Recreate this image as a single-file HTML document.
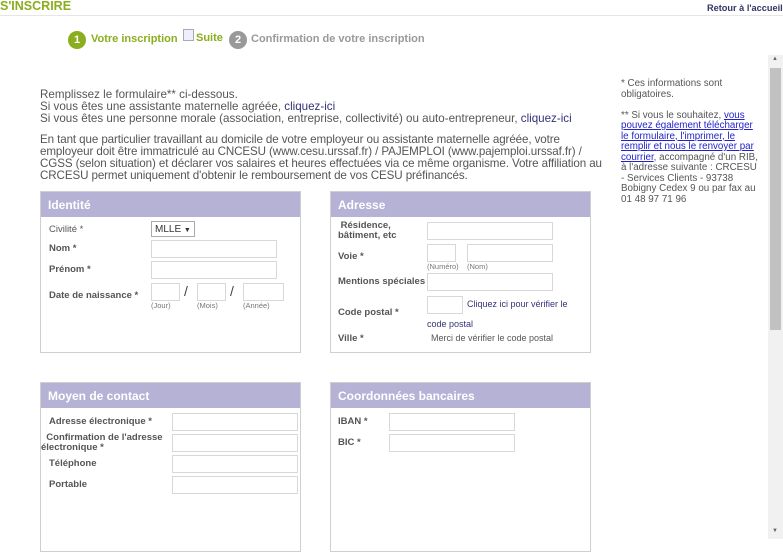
<!DOCTYPE html>
<html><head><meta charset="utf-8"><style>
*{margin:0;padding:0;box-sizing:border-box}
body{width:783px;height:539px;overflow:hidden;background:#fff;font-family:"Liberation Sans",Arial,sans-serif;position:relative;color:#555}
.a{position:absolute;white-space:nowrap}
.box{position:absolute;border:1px solid #cfcfcf;width:261px;background:#fff}
.hd{background:#b5b2d6;height:25px;color:#fff;font-weight:bold;font-size:12px;padding:6px 0 0 7px}
.in{position:absolute;border:1px solid #d8d8d8;background:#fff;height:18px}
.l{position:absolute;font-size:9.5px;font-weight:bold;color:#555;white-space:nowrap}
.s{position:absolute;font-size:7.5px;color:#777;white-space:nowrap}
a{color:#333377;text-decoration:none}
</style></head><body>
<div class="a" style="left:0;top:-1px;font-size:12.5px;font-weight:bold;color:#8aae1e">S'INSCRIRE</div>
<div style="position:absolute;left:0;top:15px;width:783px;height:1px;background:#e6e6e6"></div>
<div class="a" style="left:707px;top:3px;font-size:9.2px;font-weight:bold;color:#333366">Retour à l'accueil</div>

<div class="a" style="left:68px;top:31px;width:18px;height:18px;border-radius:50%;background:#8aae1e;color:#fff;font-size:11px;font-weight:bold;text-align:center;line-height:18px">1</div>
<div class="a" style="left:91px;top:33px;font-size:11px;font-weight:bold;color:#8aae1e">Votre inscription</div>
<div class="a" style="left:183px;top:29px;width:11px;height:12px;border:1px solid #aaa;background:#eef"></div>
<div class="a" style="left:196px;top:32px;font-size:11px;font-weight:bold;color:#8aae1e">Suite</div>
<div class="a" style="left:229px;top:31px;width:18px;height:18px;border-radius:50%;background:#999;color:#fff;font-size:11px;font-weight:bold;text-align:center;line-height:18px">2</div>
<div class="a" style="left:251px;top:33px;font-size:11px;font-weight:bold;color:#999">Confirmation de votre inscription</div>

<div class="a" style="left:40px;top:89px;font-size:11.6px;line-height:12px;color:#555">Remplissez le formulaire** ci-dessous.<br>Si vous êtes une assistante maternelle agréée, <a>cliquez-ici</a><br>Si vous êtes une personne morale (association, entreprise, collectivité) ou auto-entrepreneur, <a>cliquez-ici</a></div>
<div class="a" style="left:40px;top:134px;font-size:11.6px;line-height:12px;color:#555;letter-spacing:-0.1px">En tant que particulier travaillant au domicile de votre employeur ou assistante maternelle agréée, votre<br>employeur doit être immatriculé au CNCESU (www.cesu.urssaf.fr) / PAJEMPLOI (www.pajemploi.urssaf.fr) /<br>CGSS (selon situation) et déclarer vos salaires et heures effectuées via ce même organisme. Votre affiliation au<br>CRCESU permet uniquement d'obtenir le remboursement de vos CESU préfinancés.</div>

<div class="a" style="left:621px;top:79px;font-size:9.8px;line-height:10.5px;color:#555">* Ces informations sont<br>obligatoires.<br><br>** Si vous le souhaitez, <u style="color:#2222cc">vous</u><br><u style="color:#2222cc">pouvez également télécharger</u><br><u style="color:#2222cc">le formulaire, l'imprimer, le</u><br><u style="color:#2222cc">remplir et nous le renvoyer par</u><br><u style="color:#2222cc">courrier</u>, accompagné d'un RIB,<br>à l'adresse suivante : CRCESU<br>- Services Clients - 93738<br>Bobigny Cedex 9 ou par fax au<br>01 48 97 71 96</div>

<div style="position:absolute;left:768px;top:55px;width:15px;height:484px;background:#f1f1f1"></div>
<div style="position:absolute;left:770px;top:68px;width:11px;height:262px;background:#c1c1c1"></div>
<div class="a" style="left:772px;top:56px;font-size:6px;color:#666">▲</div>
<div class="a" style="left:772px;top:528px;font-size:6px;color:#666">▼</div>

<div class="box" style="left:40px;top:191px;height:162px"><div class="hd">Identité</div></div>
<div class="l" style="left:49px;top:224px;font-weight:normal">Civilité *</div>
<div class="in" style="left:151px;top:221px;width:44px;height:16px;font-size:10px;color:#333;padding:2px 0 0 3px;border-color:#aaa">MLLE <span style="font-size:7px">▼</span></div>
<div class="l" style="left:49px;top:243px">Nom *</div>
<div class="in" style="left:151px;top:240px;width:126px"></div>
<div class="l" style="left:49px;top:264px">Prénom *</div>
<div class="in" style="left:151px;top:261px;width:126px"></div>
<div class="l" style="left:49px;top:290px">Date de naissance *</div>
<div class="in" style="left:151px;top:283px;width:29px"></div>
<div class="a" style="left:184px;top:283px;font-size:14px;color:#444">/</div>
<div class="in" style="left:197px;top:283px;width:29px"></div>
<div class="a" style="left:230px;top:283px;font-size:14px;color:#444">/</div>
<div class="in" style="left:243px;top:283px;width:41px"></div>
<div class="s" style="left:151px;top:301px">(Jour)</div>
<div class="s" style="left:197px;top:301px">(Mois)</div>
<div class="s" style="left:243px;top:301px">(Année)</div>

<div class="box" style="left:330px;top:191px;height:162px"><div class="hd">Adresse</div></div>
<div class="l" style="left:338px;top:221px;line-height:10px">&nbsp;Résidence,<br>bâtiment, etc</div>
<div class="in" style="left:427px;top:222px;width:126px"></div>
<div class="l" style="left:338px;top:251px">Voie *</div>
<div class="in" style="left:427px;top:244px;width:29px"></div>
<div class="in" style="left:467px;top:244px;width:86px"></div>
<div class="s" style="left:427px;top:262px">(Numéro)</div>
<div class="s" style="left:467px;top:262px">(Nom)</div>
<div class="l" style="left:338px;top:276px">Mentions spéciales</div>
<div class="in" style="left:427px;top:273px;width:126px"></div>
<div class="in" style="left:427px;top:296px;width:36px"></div>
<div class="a" style="left:467px;top:299px;font-size:9px;color:#333377">Cliquez ici pour vérifier le</div>
<div class="a" style="left:427px;top:319px;font-size:9px;color:#333377">code postal</div>
<div class="l" style="left:338px;top:307px">Code postal *</div>
<div class="l" style="left:338px;top:333px">Ville *</div>
<div class="a" style="left:431px;top:333px;font-size:9px;color:#555">Merci de vérifier le code postal</div>

<div class="box" style="left:40px;top:382px;height:170px"><div class="hd">Moyen de contact</div></div>
<div class="l" style="left:49px;top:416px">Adresse électronique *</div>
<div class="in" style="left:172px;top:413px;width:126px"></div>
<div class="l" style="left:41px;top:433px;line-height:10px">&nbsp;&nbsp;Confirmation de l'adresse<br>électronique *</div>
<div class="in" style="left:172px;top:434px;width:126px"></div>
<div class="l" style="left:49px;top:458px">Téléphone</div>
<div class="in" style="left:172px;top:455px;width:126px"></div>
<div class="l" style="left:49px;top:479px">Portable</div>
<div class="in" style="left:172px;top:476px;width:126px"></div>

<div class="box" style="left:330px;top:382px;height:170px"><div class="hd">Coordonnées bancaires</div></div>
<div class="l" style="left:338px;top:416px">IBAN *</div>
<div class="in" style="left:389px;top:413px;width:126px"></div>
<div class="l" style="left:338px;top:437px">BIC *</div>
<div class="in" style="left:389px;top:434px;width:126px"></div>
</body></html>
